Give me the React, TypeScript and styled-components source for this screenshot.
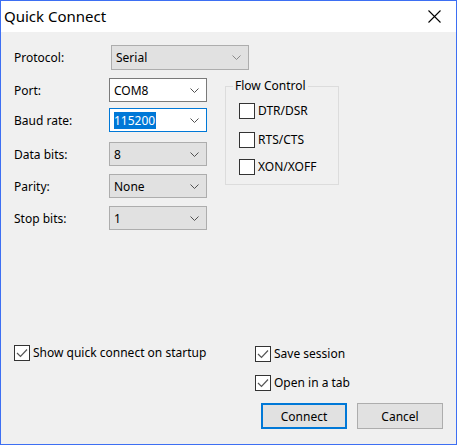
import styled, { createGlobalStyle } from 'styled-components';

const GlobalStyle = createGlobalStyle`
  html, body {
    margin: 0;
    padding: 0;
    background: #ffffff;
  }
  body {
    font-family: 'Noto Sans', 'Liberation Sans', sans-serif;
    font-size: 12px;
    color: #000;
  }
`;

const Window = styled.div`
  width: 457px;
  height: 445px;
  box-sizing: border-box;
  border: 1px solid #3d6ff3;
  background: #f0f0f0;
  display: flex;
  flex-direction: column;
`;

const TitleBar = styled.div`
  height: 31px;
  flex: none;
  background: #fff;
  display: flex;
  align-items: center;
  justify-content: space-between;
  padding: 0 15px 0 3px;
  .title {
    font-size: 15px;
    color: #000;
    margin-top: -1px;
  }
  svg {
    display: block;
  }
`;

const Body = styled.div`
  flex: 1;
  display: flex;
  flex-direction: column;
  padding: 13px 13px 15px 13px;
`;

const ProtocolRow = styled.div`
  display: flex;
  align-items: center;
  label {
    width: 97px;
  }
`;

const Columns = styled.div`
  display: flex;
  align-items: flex-start;
  margin-top: 8px;
`;

const Fields = styled.div`
  width: 194px;
  display: flex;
  flex-direction: column;
`;

const Field = styled.div<{ $top?: number }>`
  display: grid;
  grid-template-columns: 95px 98px;
  align-items: center;
  margin-top: ${(p) => p.$top ?? 0}px;
`;

const Combo = styled.div<{ $variant?: 'flat' | 'white' | 'focus'; $width?: number }>`
  box-sizing: border-box;
  width: ${(p) => p.$width ?? 98}px;
  height: ${(p) => (p.$variant === 'flat' ? 25 : 24)}px;
  display: flex;
  align-items: center;
  justify-content: space-between;
  padding: 0 7px 0 4px;
  background: ${(p) => (p.$variant === 'white' || p.$variant === 'focus' ? '#fff' : '#e1e1e1')};
  border: 1px solid
    ${(p) => (p.$variant === 'focus' ? '#0078d7' : p.$variant === 'white' ? '#7a7a7a' : '#adadad')};
  svg {
    flex: none;
  }
`;

const Selected = styled.span`
  background: #0078d7;
  color: #fff;
  line-height: 17px;
  padding: 0 1px 0 0;
`;

const Group = styled.fieldset`
  box-sizing: border-box;
  width: 114px;
  height: 107px;
  margin: 0 0 0 17px;
  padding: 0 0 0 13px;
  border: 1px solid #dcdcdc;
  min-width: 0;
  legend {
    padding: 0 2px;
    margin-left: -6px;
    line-height: 16px;
  }
`;

const Check = styled.label<{ $top?: number }>`
  display: flex;
  align-items: center;
  margin-top: ${(p) => p.$top ?? 0}px;
  white-space: nowrap;
  .box {
    box-sizing: border-box;
    width: 16px;
    height: 16px;
    border: 1px solid #333;
    background: #fff;
    margin-right: 3px;
    display: flex;
    align-items: center;
    justify-content: center;
    flex: none;
  }
`;

const Bottom = styled.div`
  margin-top: auto;
  display: flex;
  justify-content: space-between;
  align-items: flex-start;
`;

const RightCol = styled.div`
  width: 188px;
  display: flex;
  flex-direction: column;
  padding-top: 1px;
`;

const Buttons = styled.div`
  display: flex;
  justify-content: flex-end;
  gap: 10px;
  margin-top: 12px;
`;

const Button = styled.button<{ $primary?: boolean }>`
  box-sizing: border-box;
  width: 86px;
  height: 26px;
  font: inherit;
  color: #000;
  background: #e1e1e1;
  border: ${(p) => (p.$primary ? '2px solid #0078d7' : '1px solid #adadad')};
  padding: 0;
`;

const Chevron = ({ light }: { light?: boolean }) => (
  <svg width="9" height="5" viewBox="0 0 9 5">
    <polyline points="0.5,0.5 4.5,4.5 8.5,0.5" fill="none" stroke={light ? '#8a8a8a' : '#505050'} strokeWidth="1" />
  </svg>
);

function CheckBox({ label, checked, top }: { label: string; checked?: boolean; top?: number }) {
  return (
    <Check $top={top}>
      <span className='box'>
        {checked && (
          <svg width="12" height="10" viewBox="0 0 12 10">
            <polyline points="1,5 4.5,8.5 11,1.5" fill="none" stroke="#555" strokeWidth="1.2" />
          </svg>
        )}
      </span>
      {label}
    </Check>
  );
}

export default function App() {
  return (
    <>
      <GlobalStyle />
      <Window>
        <TitleBar>
          <span className='title'>Quick Connect</span>
          <svg width="13" height="13" viewBox="0 0 13 13">
            <path d="M0.5 0.5 L12.5 12.5 M12.5 0.5 L0.5 12.5" stroke="#000" strokeWidth="1.1" />
          </svg>
        </TitleBar>
        <Body>
          <ProtocolRow>
            <label>Protocol:</label>
            <Combo $variant='flat' $width={138}>
              <span>Serial</span>
              <Chevron light />
            </Combo>
          </ProtocolRow>
          <Columns>
            <Fields>
              <Field>
                <label>Port:</label>
                <Combo $variant='white'>
                  <span>COM8</span>
                  <Chevron />
                </Combo>
              </Field>
              <Field $top={6}>
                <label>Baud rate:</label>
                <Combo $variant='focus'>
                  <Selected>115200</Selected>
                  <Chevron />
                </Combo>
              </Field>
              <Field $top={10}>
                <label>Data bits:</label>
                <Combo>
                  <span>8</span>
                  <Chevron />
                </Combo>
              </Field>
              <Field $top={8}>
                <label>Parity:</label>
                <Combo>
                  <span>None</span>
                  <Chevron />
                </Combo>
              </Field>
              <Field $top={8}>
                <label>Stop bits:</label>
                <Combo>
                  <span>1</span>
                  <Chevron />
                </Combo>
              </Field>
            </Fields>
            <Group>
              <legend>Flow Control</legend>
              <CheckBox label='DTR/DSR' top={8} />
              <CheckBox label='RTS/CTS' top={12} />
              <CheckBox label='XON/XOFF' top={10} />
            </Group>
          </Columns>
          <Bottom>
            <CheckBox label='Show quick connect on startup' checked />
            <RightCol>
              <CheckBox label='Save session' checked />
              <CheckBox label='Open in a tab' checked top={12} />
              <Buttons>
                <Button $primary>Connect</Button>
                <Button>Cancel</Button>
              </Buttons>
            </RightCol>
          </Bottom>
        </Body>
      </Window>
    </>
  );
}
